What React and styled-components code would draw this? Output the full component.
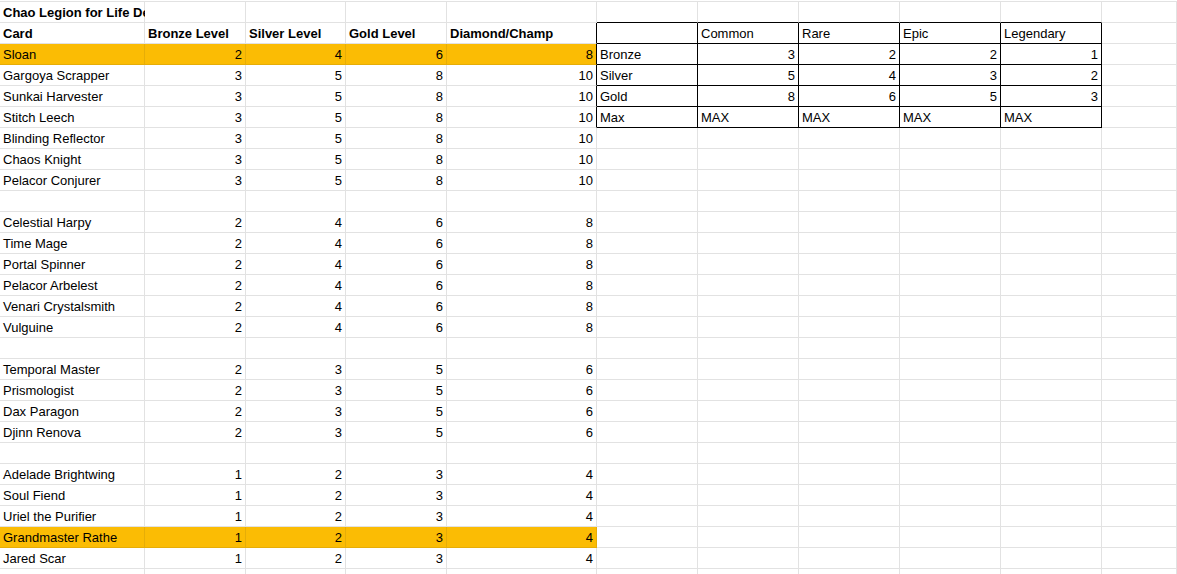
import React from "react";
import styled, { createGlobalStyle } from "styled-components";

const G = createGlobalStyle`
  body { margin:0; background:#fff; font-family:"Liberation Sans", Arial, sans-serif; }
`;

const widths = [145, 101, 100, 101, 150, 101, 101, 101, 101, 101, 75];

const Sheet = styled.div`
  display:grid;
  grid-template-columns:${widths.map((w) => w + "px").join(" ")};
  grid-auto-rows:21px;
  padding-top:2px;
  border-top:0;
  width:1177px;
  height:574px;
  overflow:hidden;
  position:relative;
  &::before{content:"";position:absolute;left:0;right:0;top:1px;height:1px;background:#e2e2e2;}
`;

const Cell = styled.div`
  box-sizing:border-box;
  border-right:1px solid ${(p) => (p.$br ? "#000" : p.$hl ? "#e6ad07" : "#e2e2e2")};
  border-bottom:1px solid ${(p) => (p.$bb ? "#000" : p.$hl ? "#e6ad07" : "#e2e2e2")};
  background:${(p) => (p.$hl ? "#fbbc04" : "#fff")};
  font-size:13px;
  font-weight:${(p) => (p.$bold ? 700 : 400)};
  color:#000;
  padding:0 3px;
  display:flex;
  align-items:flex-end;
  padding-bottom:2px;
  justify-content:${(p) => (p.$num ? "flex-end" : "flex-start")};
  white-space:nowrap;
  overflow:visible;
  line-height:15px;
`;

const cards = [
  ["Sloan", 2, 4, 6, 8, true],
  ["Gargoya Scrapper", 3, 5, 8, 10],
  ["Sunkai Harvester", 3, 5, 8, 10],
  ["Stitch Leech", 3, 5, 8, 10],
  ["Blinding Reflector", 3, 5, 8, 10],
  ["Chaos Knight", 3, 5, 8, 10],
  ["Pelacor Conjurer", 3, 5, 8, 10],
  null,
  ["Celestial Harpy", 2, 4, 6, 8],
  ["Time Mage", 2, 4, 6, 8],
  ["Portal Spinner", 2, 4, 6, 8],
  ["Pelacor Arbelest", 2, 4, 6, 8],
  ["Venari Crystalsmith", 2, 4, 6, 8],
  ["Vulguine", 2, 4, 6, 8],
  null,
  ["Temporal Master", 2, 3, 5, 6],
  ["Prismologist", 2, 3, 5, 6],
  ["Dax Paragon", 2, 3, 5, 6],
  ["Djinn Renova", 2, 3, 5, 6],
  null,
  ["Adelade Brightwing", 1, 2, 3, 4],
  ["Soul Fiend", 1, 2, 3, 4],
  ["Uriel the Purifier", 1, 2, 3, 4],
  ["Grandmaster Rathe", 1, 2, 3, 4, true],
  ["Jared Scar", 1, 2, 3, 4],
  null,
];

const right = [
  ["", "Common", "Rare", "Epic", "Legendary"],
  ["Bronze", 3, 2, 2, 1],
  ["Silver", 5, 4, 3, 2],
  ["Gold", 8, 6, 5, 3],
  ["Max", "MAX", "MAX", "MAX", "MAX"],
];

const rows = [];
rows.push({ cells: [{ v: "Chao Legion for Life Deck", bold: true }] });
rows.push({
  cells: ["Card", "Bronze Level", "Silver Level", "Gold Level", "Diamond/Champ"].map((v) => ({ v, bold: true })),
});
cards.forEach((c) => {
  if (!c) rows.push({ cells: [] });
  else
    rows.push({
      hl: c[5],
      cells: [{ v: c[0] }, ...c.slice(1, 5).map((v) => ({ v, num: true }))],
    });
});

export default function App() {
  const out = [];
  rows.forEach((r, ri) => {
    for (let ci = 0; ci < 11; ci++) {
      let v = "", num = false, bold = false, hl = false, br = false, bb = false;
      if (ci < 5) {
        const c = r.cells[ci];
        if (c) { v = c.v; num = c.num; bold = c.bold; }
        hl = !!r.hl;
        if (ci === 4 && ri >= 1 && ri <= 5) br = true;
      } else if (ci <= 9) {
        const tr = ri - 1;
        if (ri === 0) bb = true;
        if (tr >= 0 && tr < 5) {
          br = bb = true;
          const val = right[tr][ci - 5];
          v = val;
          num = typeof val === "number";
        }
      }
      out.push(
        <Cell key={ri + "-" + ci} $num={num} $bold={bold} $hl={hl} $br={br} $bb={bb}>
          {v}
        </Cell>
      );
    }
  });
  return (
    <>
      <G />
      <Sheet>{out}</Sheet>
    </>
  );
}
